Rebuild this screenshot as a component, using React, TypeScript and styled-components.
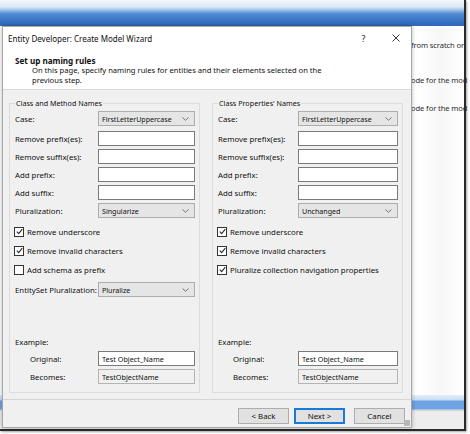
import React from 'react';
import styled, { createGlobalStyle } from 'styled-components';

const GlobalStyle = createGlobalStyle`
    html, body {
        margin: 0;
        padding: 0;
        background: #ffffff;
    }
    body {
        font-family: "Noto Sans", "Open Sans", sans-serif;
        font-size: 7.8px;
        color: #111111;
    }
`;

const Desktop = styled.div`
    position: relative;
    width: 470px;
    height: 434px;
    overflow: hidden;
    background: #ffffff;
`;

/* window behind the wizard */
const BackWindow = styled.div`
    position: absolute;
    left: 0;
    top: 0;
    width: 464px;
    height: 429px;
    display: flex;
    flex-direction: column;
    background: #ffffff;
    border-right: 2px solid #2a2a2a;
    border-bottom: 2px solid #2a2a2a;
    box-shadow: 1px 1px 2px rgba(0, 0, 0, 0.35);
`;

const BackTitle = styled.div`
    height: 26px;
    flex: none;
    background: linear-gradient(to bottom, #f3f7fc 0px, #dbe8f6 7px, #9fc0e8 10px, #4f89d2 14px, #3370c2 22px, #2d68ba 26px);
`;

const BackBody = styled.div`
    flex: 1;
    display: flex;
    flex-direction: column;
    padding-left: 411px;
    background: linear-gradient(to right, #ffffff 420px, #f7f7f7 440px, #ffffff 464px);
`;

const BackLine = styled.div<{ $top: number }>`
    margin-top: ${p => p.$top}px;
    height: 10px;
    line-height: 10px;
    white-space: nowrap;
    color: #2c2c2c;
    font-size: 7.6px;
    letter-spacing: -0.1px;
`;

const BackSpacer = styled.div`
    flex: 1;
`;

const BackSelection = styled.div`
    margin-left: -411px;
    height: 15px;
    background: linear-gradient(to bottom, #e4eefa 0px, #c9dcf4 5px, #6fa3e4 6px, #6fa3e4 14px, #dfe6ee 15px);
`;

const BackStatus = styled.div`
    margin-left: -411px;
    height: 18px;
    background: #ededed;
    border-top: 1px solid #d6d6d6;
`;

/* the wizard dialog */
const Dialog = styled.div`
    position: absolute;
    left: 2px;
    top: 26px;
    width: 408px;
    height: 400px;
    display: flex;
    flex-direction: column;
    border: 1px solid #a8a8a8;
    background: #f0f0f0;
    box-shadow: 0 0 4px rgba(0, 0, 0, 0.3);
`;

const TitleBar = styled.div`
    height: 22px;
    display: flex;
    align-items: center;
    padding-left: 5px;
    background: #ffffff;
    color: #111;
`;

const TitleText = styled.div`
    flex: 1;
    font-size: 8px;
`;

const TitleButton = styled.div<{ $w: number }>`
    width: ${p => p.$w}px;
    display: flex;
    justify-content: center;
    font-size: 9px;
    color: #222;
`;

const Header = styled.div`
    height: 41px;
    box-sizing: border-box;
    padding: 6px 0 0 12px;
    background: #ffffff;
    border-bottom: 1px solid #d9d9d9;
`;

const HeaderTitle = styled.div`
    font-weight: bold;
    font-size: 8.1px;
    line-height: 11px;
`;

const HeaderText = styled.div`
    padding-left: 17px;
    line-height: 9.5px;
    font-size: 7.6px;
`;

const Body = styled.div`
    flex: 1;
    display: flex;
    gap: 12px;
    padding: 13px 8px 6px 6px;
    border-bottom: 1px solid #d5d5d5;
`;

const Group = styled.div`
    position: relative;
    flex: 1;
    display: flex;
    flex-direction: column;
    border: 1px solid #dcdcdc;
    padding: 7px 4px 8px 5px;
`;

const GroupTitle = styled.div`
    position: absolute;
    top: -6px;
    left: 5px;
    padding: 0 1px;
    line-height: 11px;
    background: #f0f0f0;
    font-size: 7.2px;
`;

const FieldGrid = styled.div<{ $label: number; $after?: number }>`
    display: grid;
    grid-template-columns: ${p => p.$label}px 1fr;
    grid-auto-rows: 15px;
    row-gap: 3px;
    align-items: center;
    margin-bottom: ${p => p.$after || 0}px;
`;

const Label = styled.div<{ $indent?: number }>`
    padding-left: ${p => p.$indent || 0}px;
    white-space: nowrap;
`;

const SelectBox = styled.div`
    height: 15px;
    box-sizing: border-box;
    display: flex;
    align-items: center;
    padding: 0 5px 0 3px;
    background: #e5e5e5;
    border: 1px solid #adadad;
    font-size: 7.1px;
    svg {
        margin-left: auto;
    }
`;

const TextBox = styled.div<{ $readOnly?: boolean }>`
    height: 15px;
    box-sizing: border-box;
    display: flex;
    align-items: center;
    padding: 0 3px;
    background: ${p => (p.$readOnly ? '#f0f0f0' : '#ffffff')};
    border: 1px solid ${p => (p.$readOnly ? '#b4b4b4' : '#7a7a7a')};
    font-size: 7.3px;
`;

const CheckList = styled.div`
    display: flex;
    flex-direction: column;
    margin: 4px 0 3px -1px;
`;

const CheckRow = styled.div`
    height: 19px;
    display: flex;
    align-items: center;
    gap: 3px;
    white-space: nowrap;
`;

const Box = styled.div`
    width: 8px;
    height: 8px;
    border: 1px solid #333333;
    background: #ffffff;
    display: flex;
    align-items: center;
    justify-content: center;
`;

const Example = styled.div`
    margin-top: auto;
`;

const ExampleTitle = styled.div`
    line-height: 12px;
    margin-bottom: 3px;
`;

const Footer = styled.div`
    height: 27px;
    display: flex;
    justify-content: flex-end;
    align-items: flex-start;
    padding: 8px 6px 0 0;
    box-sizing: border-box;
`;

const Button = styled.div<{ $gap?: number; $default?: boolean }>`
    width: 51px;
    height: 16px;
    box-sizing: border-box;
    margin-left: ${p => p.$gap || 0}px;
    display: flex;
    align-items: center;
    justify-content: center;
    background: #e1e1e1;
    border: ${p => (p.$default ? '2px solid #1a7ad6' : '1px solid #adadad')};
    font-size: 7.8px;
`;

const Grip = styled.div`
    position: absolute;
    right: 1px;
    bottom: 1px;
    width: 6px;
    height: 6px;
    background-image: radial-gradient(circle, #b8b8b8 0.8px, transparent 1px);
    background-size: 2px 2px;
`;

const Chevron = () => (
    <svg width="7" height="4" viewBox="0 0 7 4">
        <polyline points="0.5,0.5 3.5,3.3 6.5,0.5" fill="none" stroke="#6a6a6a" strokeWidth="0.9" />
    </svg>
);

const Check = () => (
    <svg width="7" height="7" viewBox="0 0 7 7">
        <polyline points="0.8,3.6 2.7,5.6 6.3,1.2" fill="none" stroke="#2b2b2b" strokeWidth="1.1" />
    </svg>
);

const CloseIcon = () => (
    <svg width="8" height="8" viewBox="0 0 8 8">
        <path d="M0.5 0.5 L7.5 7.5 M7.5 0.5 L0.5 7.5" stroke="#222" strokeWidth="0.9" />
    </svg>
);

const Select = ({ value }: { value: string }) => (
    <SelectBox>
        {value}
        <Chevron />
    </SelectBox>
);

const CheckItem = ({ label, checked }: { label: string; checked?: boolean }) => (
    <CheckRow>
        <Box>{checked && <Check />}</Box>
        {label}
    </CheckRow>
);

type GroupProps = {
    title: string;
    labelWidth: number;
    plural: string;
    checks: { label: string; checked: boolean }[];
    entitySet?: boolean;
};

const NamesGroup = ({ title, labelWidth, plural, checks, entitySet }: GroupProps) => (
    <Group>
        <GroupTitle>{title}</GroupTitle>
        <FieldGrid $label={labelWidth} $after={5}>
            <Label>Case:</Label>
            <Select value="FirstLetterUppercase" />
        </FieldGrid>
        <FieldGrid $label={labelWidth}>
            <Label>Remove prefix(es):</Label>
            <TextBox />
            <Label>Remove suffix(es):</Label>
            <TextBox />
            <Label>Add prefix:</Label>
            <TextBox />
            <Label>Add suffix:</Label>
            <TextBox />
            <Label>Pluralization:</Label>
            <Select value={plural} />
        </FieldGrid>
        <CheckList>
            {checks.map(c => (
                <CheckItem key={c.label} label={c.label} checked={c.checked} />
            ))}
        </CheckList>
        {entitySet && (
            <FieldGrid $label={labelWidth}>
                <Label>EntitySet Pluralization:</Label>
                <Select value="Pluralize" />
            </FieldGrid>
        )}
        <Example>
            <ExampleTitle>Example:</ExampleTitle>
            <FieldGrid $label={labelWidth}>
                <Label $indent={15}>Original:</Label>
                <TextBox>Test Object_Name</TextBox>
                <Label $indent={15}>Becomes:</Label>
                <TextBox $readOnly>TestObjectName</TextBox>
            </FieldGrid>
        </Example>
    </Group>
);

const App = () => {
    return (
        <Desktop>
            <GlobalStyle />
            <BackWindow>
                <BackTitle />
                <BackBody>
                    <BackLine $top={14}>from scratch or</BackLine>
                    <BackLine $top={25}>ode for the mod</BackLine>
                    <BackLine $top={18}>ode for the mod</BackLine>
                    <BackSpacer />
                    <BackSelection />
                    <BackStatus />
                </BackBody>
            </BackWindow>

            <Dialog>
                <TitleBar>
                    <TitleText>Entity Developer: Create Model Wizard</TitleText>
                    <TitleButton $w={33}>?</TitleButton>
                    <TitleButton $w={31}>
                        <CloseIcon />
                    </TitleButton>
                </TitleBar>
                <Header>
                    <HeaderTitle>Set up naming rules</HeaderTitle>
                    <HeaderText>
                        On this page, specify naming rules for entities and their elements selected on the
                        <br />
                        previous step.
                    </HeaderText>
                </Header>
                <Body>
                    <NamesGroup
                        title="Class and Method Names"
                        labelWidth={83}
                        plural="Singularize"
                        entitySet
                        checks={[
                            { label: 'Remove underscore', checked: true },
                            { label: 'Remove invalid characters', checked: true },
                            { label: 'Add schema as prefix', checked: false },
                        ]}
                    />
                    <NamesGroup
                        title="Class Properties' Names"
                        labelWidth={80}
                        plural="Unchanged"
                        checks={[
                            { label: 'Remove underscore', checked: true },
                            { label: 'Remove invalid characters', checked: true },
                            { label: 'Pluralize collection navigation properties', checked: true },
                        ]}
                    />
                </Body>
                <Footer>
                    <Button>&lt; Back</Button>
                    <Button $gap={5} $default>Next &gt;</Button>
                    <Button $gap={9}>Cancel</Button>
                </Footer>
                <Grip />
            </Dialog>
        </Desktop>
    );
};

export default App;
